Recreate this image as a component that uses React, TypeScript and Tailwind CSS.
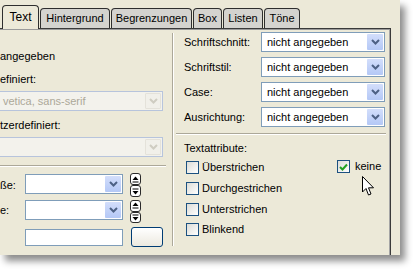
import React from 'react';

const tabs = [
  { label: 'Text', w: 'w-[37px]', active: true },
  { label: 'Hintergrund', w: 'w-[70px]' },
  { label: 'Begrenzungen', w: 'w-[81px]' },
  { label: 'Box', w: 'w-[29px]' },
  { label: 'Listen', w: 'w-[40px]' },
  { label: 'Töne', w: 'w-[36px]' },
];

const Chevron = ({ color }: { color: string }) => (
  <svg width="9" height="6" viewBox="0 0 9 6">
    <path d="M1 1 L4.5 4.5 L8 1" fill="none" stroke={color} strokeWidth="2" />
  </svg>
);

function Combo({ text, className, disabled }: { text?: string; className: string; disabled?: boolean }) {
  return (
    <div
      className={`flex items-center h-[20px] border ${
        disabled ? 'border-[#b7c4dc] bg-[#f3f2ec] text-[#aca899]' : 'border-[#7f9db9] bg-white text-black'
      } ${className}`}
    >
      <span className="flex-1 pl-[5px] whitespace-nowrap overflow-hidden leading-[14px]">{text}</span>
      <div
        className={`w-[16px] h-[16px] mr-[1px] flex items-center justify-center rounded-[1px] ${
          disabled ? 'border border-[#e4e2da] bg-[#f1f0ea]' : 'bg-gradient-to-b from-[#d3defb] to-[#b4c8f6]'
        }`}
      >
        <Chevron color={disabled ? '#cfcdc2' : '#4d6185'} />
      </div>
    </div>
  );
}

function Spinner({ h }: { h: string }) {
  return (
    <div className={`flex flex-col w-[11px] ${h}`}>
      <div className="flex-1 border border-[#2a2a2a] rounded-[3px] bg-white flex items-center justify-center">
        <svg width="7" height="7" viewBox="0 0 7 7">
          <path d="M3.5 0.5 L6.5 4 L0.5 4 Z" fill="#000" />
          <rect x="0.5" y="5.5" width="6" height="1" fill="#000" />
        </svg>
      </div>
      <div className="flex-1 border border-[#2a2a2a] rounded-[3px] bg-white flex items-center justify-center">
        <svg width="7" height="7" viewBox="0 0 7 7">
          <rect x="0.5" y="0.5" width="6" height="1" fill="#000" />
          <path d="M0.5 3 L6.5 3 L3.5 6.5 Z" fill="#000" />
        </svg>
      </div>
    </div>
  );
}

function Check({ checked }: { checked?: boolean }) {
  return (
    <div className="w-[13px] h-[13px] border border-[#1c5180] bg-gradient-to-br from-[#dcdcd7] to-white flex items-center justify-center">
      {checked && (
        <svg width="9" height="8" viewBox="0 0 9 8">
          <path d="M1 4 L3.5 6.5 L8 1.5" fill="none" stroke="#21a121" strokeWidth="2" />
        </svg>
      )}
    </div>
  );
}

const labelRow = (label: string, last?: boolean) => (
  <div className={`flex items-center h-[20px] ${last ? '' : 'mb-[5px]'}`}>
    <span className="w-[87px] pl-[10px] whitespace-nowrap">{label}</span>
    <Combo text="nicht angegeben" className="w-[124px]" />
  </div>
);

const App: React.FC = () => {
  return (
    <div className="w-[416px] h-[272px] bg-white overflow-hidden font-['Liberation_Sans',Arial,sans-serif] text-[11px] text-black">
      <div className="relative w-[400px] h-[255px] bg-[#ece9d8] overflow-hidden shadow-[5px_6px_7px_rgba(0,0,0,0.45)]">
        {/* tabs */}
        <div className="flex items-end h-[28px] pl-[2px]">
          {tabs.map((t) => (
            <div
              key={t.label}
              className={`${t.w} flex items-center justify-center border border-b-0 border-[#2e2e2e] rounded-t-[4px] whitespace-nowrap ${
                t.active
                  ? 'h-[24px] bg-[#ece9d8] relative z-10 mb-[-1px] text-[12px] pb-[1px]'
                  : 'h-[20px] bg-[#d4d3cf] ml-[1px]'
              }`}
            >
              {t.label}
            </div>
          ))}
        </div>

        {/* tab page */}
        <div className="w-[391px] h-[260px] border-t border-r border-[#3a3a3a] shadow-[inset_0_1px_0_#9a9a9a,inset_-1px_0_0_#a5a5a5] flex">
          {/* left column */}
          <div className="w-[168px] flex flex-col">
            <div className="mt-[20px] h-[14px] leading-[14px]">angegeben</div>
            <div className="mt-[9px] h-[14px] leading-[14px]">efiniert:</div>
            <Combo disabled text="vetica, sans-serif" className="mt-[5px] ml-[-3px] w-[166px]" />
            <div className="mt-[7px] h-[14px] leading-[14px]">tzerdefiniert:</div>
            <Combo disabled className="mt-[5px] ml-[-3px] w-[166px]" />
            <div className="mt-[8px] w-[166px] h-[2px] border-t border-[#aca899] border-b border-b-white" />
            <div className="mt-[6px] flex h-[24px]">
              <span className="w-[25px] pt-[5px] leading-[14px]">ße:</span>
              <Combo className="mt-[1px] w-[98px]" />
              <div className="ml-[7px]">
                <Spinner h="h-[24px]" />
              </div>
            </div>
            <div className="mt-[3px] flex h-[23px]">
              <span className="w-[25px] pt-[3px] leading-[14px]">e:</span>
              <Combo className="w-[98px]" />
              <div className="ml-[7px]">
                <Spinner h="h-[23px]" />
              </div>
            </div>
            <div className="mt-[4px] flex h-[20px]">
              <div className="ml-[25px] mt-[2px] w-[98px] h-[17px] border border-[#7f9db9] bg-white" />
              <div className="ml-[8px] w-[32px] h-[20px] border border-[#003c74] rounded-[3px] bg-gradient-to-b from-white to-[#ece9df]" />
            </div>
          </div>

          {/* vertical separator */}
          <div className="ml-[4px] mt-[4px] w-[2px] h-[213px] border-l border-[#aca899] border-r border-r-white" />

          {/* right column */}
          <div className="flex-1 flex flex-col relative">
            <div className="mt-[3px]">
              {labelRow('Schriftschnitt:')}
              {labelRow('Schriftstil:')}
              {labelRow('Case:')}
              {labelRow('Ausrichtung:', true)}
            </div>
            <div className="mt-[6px] ml-[2px] w-[210px] h-[2px] border-t border-[#aca899] border-b border-b-white" />
            <div className="mt-[6px] h-[14px] leading-[14px] pl-[10px]">Textattribute:</div>
            <div className="mt-[2px] grid grid-cols-[151px_auto] pl-[12px]">
              <div className="flex items-center h-[21px] gap-[3px]">
                <Check />
                <span>Überstrichen</span>
              </div>
              <div className="flex items-center h-[21px] gap-[5px] mt-[-1px]">
                <Check checked />
                <span>keine</span>
              </div>
              <div className="flex items-center h-[21px] gap-[3px] col-start-1">
                <Check />
                <span>Durchgestrichen</span>
              </div>
              <div className="flex items-center h-[20px] gap-[3px] col-start-1">
                <Check />
                <span>Unterstrichen</span>
              </div>
              <div className="flex items-center h-[20px] gap-[3px] col-start-1">
                <Check />
                <span>Blinkend</span>
              </div>
            </div>
            {/* mouse cursor */}
            <svg className="absolute left-[188px] top-[147px]" width="13" height="21" viewBox="0 0 13 21">
              <path
                d="M0.5 0.5 L0.5 16 L4 12.5 L6.5 19 L9 18 L6.5 11.8 L11.5 11.8 Z"
                fill="#fff"
                stroke="#000"
                strokeWidth="1"
                strokeLinejoin="round"
              />
            </svg>
          </div>
        </div>
      </div>
    </div>
  );
};

export default App;
